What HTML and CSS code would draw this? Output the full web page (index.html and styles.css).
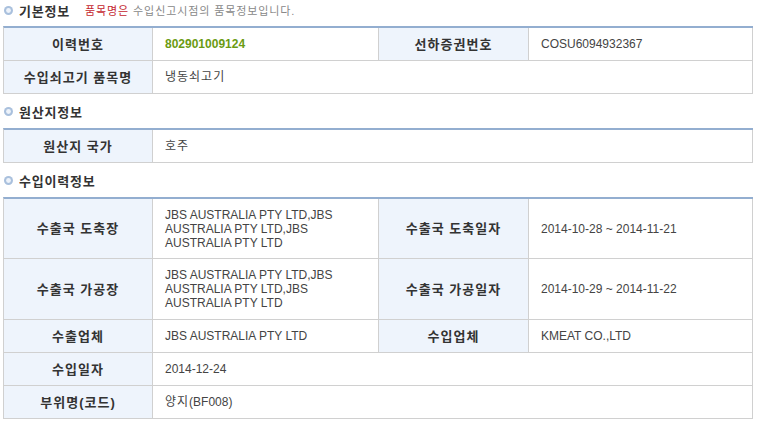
FILE: index.html
```html
<!DOCTYPE html>
<html lang="ko">
<head>
<meta charset="utf-8">
<title>수입쇠고기 이력정보</title>
<link rel="stylesheet" href="styles.css">
</head>
<body>
<div class="page">
  <div class="heading first">
    <svg class="bullet" width="9" height="9" viewBox="0 0 9 9"><circle cx="4.5" cy="4.5" r="4.5" fill="#a9c0dd"/><circle cx="4.5" cy="4.5" r="2.4" fill="#eef3fa"/></svg>
    <span class="title">기본정보</span>
    <span class="note"><em>품목명은</em> 수입신고시점의 품목정보입니다.</span>
  </div>
  <div class="grid">
    <div class="lbl">이력번호</div>
    <div class="val green">802901009124</div>
    <div class="lbl">선하증권번호</div>
    <div class="val">COSU6094932367</div>
    <div class="lbl">수입쇠고기 품목명</div>
    <div class="val ko span3">냉동쇠고기</div>
  </div>

  <div class="heading">
    <svg class="bullet" width="9" height="9" viewBox="0 0 9 9"><circle cx="4.5" cy="4.5" r="4.5" fill="#a9c0dd"/><circle cx="4.5" cy="4.5" r="2.4" fill="#eef3fa"/></svg>
    <span class="title">원산지정보</span>
  </div>
  <div class="grid">
    <div class="lbl">원산지 국가</div>
    <div class="val ko span3">호주</div>
  </div>

  <div class="heading">
    <svg class="bullet" width="9" height="9" viewBox="0 0 9 9"><circle cx="4.5" cy="4.5" r="4.5" fill="#a9c0dd"/><circle cx="4.5" cy="4.5" r="2.4" fill="#eef3fa"/></svg>
    <span class="title">수입이력정보</span>
  </div>
  <div class="grid">
    <div class="lbl tall">수출국 도축장</div>
    <div class="val tall">JBS AUSTRALIA PTY LTD,JBS AUSTRALIA PTY LTD,JBS AUSTRALIA PTY LTD</div>
    <div class="lbl tall">수출국 도축일자</div>
    <div class="val tall">2014-10-28 ~ 2014-11-21</div>
    <div class="lbl tall2">수출국 가공장</div>
    <div class="val tall2">JBS AUSTRALIA PTY LTD,JBS AUSTRALIA PTY LTD,JBS AUSTRALIA PTY LTD</div>
    <div class="lbl tall2">수출국 가공일자</div>
    <div class="val tall2">2014-10-29 ~ 2014-11-22</div>
    <div class="lbl">수출업체</div>
    <div class="val">JBS AUSTRALIA PTY LTD</div>
    <div class="lbl">수입업체</div>
    <div class="val">KMEAT CO.,LTD</div>
    <div class="lbl">수입일자</div>
    <div class="val span3">2014-12-24</div>
    <div class="lbl">부위명(코드)</div>
    <div class="val span3"><span class="ko">양지</span>(BF008)</div>
  </div>
</div>
</body>
</html>
```
FILE: styles.css
```css
html, body {
  margin: 0;
  padding: 0;
  background: #ffffff;
}
body {
  font-family: "Liberation Sans", "Noto Sans CJK KR", sans-serif;
  color: #444;
}
.page {
  padding-left: 3px;
  width: 750px;
}
.heading {
  display: flex;
  align-items: center;
  height: 20px;
  margin-top: 7px;
  margin-bottom: 7px;
  padding-left: 1px;
}
.heading.first {
  margin-top: 0;
  margin-bottom: 6px;
}
.bullet {
  display: block;
  flex: none;
  margin-right: 6px;
}
.title {
  font-size: 13px;
  font-weight: 700;
  color: #333;
  letter-spacing: 0.8px;
}
.note {
  margin-left: 15px;
  font-size: 11px;
  color: #888;
  letter-spacing: 0.9px;
}
.note em {
  font-style: normal;
  color: #c4262e;
}
.grid {
  display: grid;
  grid-template-columns: 149px 226px 150px 224px;
  border-top: 2px solid #93aed0;
  border-left: 1px solid #d0d0d0;
  width: 750px;
  box-sizing: border-box;
}
.lbl, .val {
  box-sizing: border-box;
  height: 33px;
  border-right: 1px solid #d0d0d0;
  border-bottom: 1px solid #d0d0d0;
  display: flex;
  align-items: center;
}
.lbl {
  justify-content: center;
  background: #eef4fc;
  font-size: 13px;
  font-weight: 700;
  color: #333;
  letter-spacing: 1px;
  padding-bottom: 2px;
}
.val {
  padding: 0 12px 0 12px;
  font-size: 12px;
  color: #444;
  line-height: 14px;
}
.ko {
  letter-spacing: 1px;
}
.val.green {
  color: #6b9b12;
  font-weight: 700;
}
.span3 {
  grid-column: span 3;
}
.tall {
  height: 60px;
}
.tall2 {
  height: 61px;
}
```
